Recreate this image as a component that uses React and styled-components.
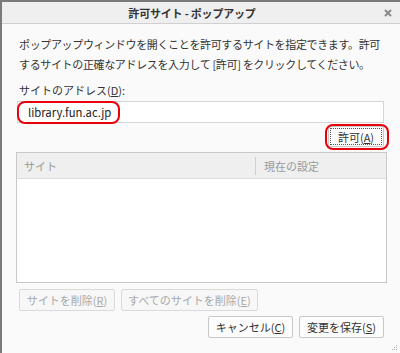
import React from 'react';
import styled, { createGlobalStyle } from 'styled-components';

const GlobalStyle = createGlobalStyle`
  html, body {
    margin: 0;
    padding: 0;
    background: #fafafa;
  }
  body {
    font-family: "Noto Sans CJK JP", "Noto Sans", sans-serif;
    font-size: 11px;
    color: #333;
  }
`;

const Window = styled.div`
  position: relative;
  box-sizing: border-box;
  width: 400px;
  height: 353px;
  display: flex;
  flex-direction: column;
  background: #fafafa;
  border-top: 2px solid #7a7a7a;
  border-left: 2px solid #7a7a7a;
`;

const TitleBar = styled.div`
  position: relative;
  height: 21px;
  padding-right: 18px;
  display: flex;
  align-items: center;
  justify-content: center;
  background: #efefef;
  border-bottom: 1px solid #cfcfcf;
  font-weight: bold;
  font-size: 11px;
  letter-spacing: -0.2px;
  color: #333;
`;

const CloseBtn = styled.span`
  position: absolute;
  right: 8px;
  top: 7px;
  width: 8px;
  height: 8px;
  display: flex;
`;

const Content = styled.div`
  display: flex;
  flex-direction: column;
  padding: 10px 16px 0 15px;
`;

const Description = styled.p`
  margin: 0 0 0 2px;
  line-height: 20px;
  letter-spacing: -0.35px;
  white-space: nowrap;

  span {
    display: block;
  }
`;

const Label = styled.div`
  margin: 6px 0 0 2px;
  line-height: 20px;
`;

const Key = styled.u`
  text-underline-offset: 1px;
`;

const InputWrap = styled.div`
  position: relative;
  margin-top: 1px;
`;

const AddressInput = styled.div`
  box-sizing: border-box;
  height: 22px;
  padding: 0 10px;
  display: flex;
  align-items: center;
  background: #fff;
  border: 1px solid #d4d4d4;
  font-size: 11.3px;
  color: #222;
`;

const Highlight = styled.div`
  position: absolute;
  box-sizing: border-box;
  border: 2px solid #e8000b;
  border-radius: 8px;
  pointer-events: none;
  left: ${({ l }) => l}px;
  top: ${({ t }) => t}px;
  width: ${({ w }) => w}px;
  height: ${({ h }) => h}px;
`;

const Row = styled.div`
  display: flex;
  justify-content: ${({ end }) => (end ? 'flex-end' : 'flex-start')};
  gap: 6px;
  margin-top: ${({ mt }) => mt}px;
  margin-left: ${({ ml }) => ml || 0}px;
`;

const Button = styled.button`
  position: relative;
  box-sizing: border-box;
  height: ${({ h }) => h || 22}px;
  min-width: ${({ mw }) => mw || 0}px;
  padding: 0 6px;
  font-family: inherit;
  font-size: 11px;
  color: ${({ disabled }) => (disabled ? '#a8a8a8' : '#333')};
  background: ${({ disabled }) => (disabled ? '#f7f7f7' : '#fcfcfc')};
  border: 1px solid ${({ disabled }) => (disabled ? '#dadada' : '#c8c8c8')};
  border-radius: 2px;
  display: flex;
  align-items: center;
  justify-content: center;
  outline: ${({ focused }) => (focused ? '1px dotted #555' : 'none')};
  outline-offset: -3px;
`;

const FocusWrap = styled.div`
  position: relative;
`;

const SiteList = styled.div`
  box-sizing: border-box;
  height: 131px;
  margin: 5px -3px 0 -1px;
  background: #fff;
  border: 1px solid #c8c8c8;
  display: flex;
  flex-direction: column;
`;

const ListHeader = styled.div`
  display: flex;
  align-items: center;
  height: 25px;
  background: #efefef;
  border-bottom: 1px solid #dcdcdc;
  color: #9a9a9a;
`;

const HeaderCell = styled.div`
  display: flex;
  align-items: center;
  height: 18px;
  padding-left: ${({ pl }) => pl}px;
  width: ${({ w }) => (w ? `${w}px` : 'auto')};
  flex: ${({ w }) => (w ? 'none' : 1)};
  border-left: ${({ divider }) => (divider ? '1px solid #cfcfcf' : 'none')};
`;

const Grip = styled.svg`
  position: absolute;
  right: 2px;
  bottom: 2px;
`;

const App = () => (
  <>
    <GlobalStyle />
    <Window>
      <TitleBar>
        許可サイト - ポップアップ
        <CloseBtn>
          <svg width="8" height="8" viewBox="0 0 8 8">
            <path d="M1 1 L7 7 M7 1 L1 7" stroke="#8a8a8a" strokeWidth="2" />
          </svg>
        </CloseBtn>
      </TitleBar>
      <Content>
        <Description>
          <span>ポップアップウィンドウを開くことを許可するサイトを指定できます。許可</span>
          <span>するサイトの正確なアドレスを入力して [許可] をクリックしてください。</span>
        </Description>
        <Label>
          サイトのアドレス(<Key>D</Key>):
        </Label>
        <InputWrap>
          <AddressInput>library.fun.ac.jp</AddressInput>
          <Highlight l={0} t={0} w={103} h={23} />
        </InputWrap>
        <Row end mt={3}>
          <FocusWrap>
            <Button focused h={21} mw={56}>
              許可(<Key>A</Key>)
            </Button>
            <Highlight l={-3} t={-2} w={64} h={26} />
          </FocusWrap>
        </Row>
        <SiteList>
          <ListHeader>
            <HeaderCell pl={7} w={231}>サイト</HeaderCell>
            <HeaderCell pl={8} divider>現在の設定</HeaderCell>
          </ListHeader>
        </SiteList>
        <Row mt={6} ml={2}>
          <Button disabled mw={96}>
            サイトを削除(<Key>R</Key>)
          </Button>
          <Button disabled mw={136}>
            すべてのサイトを削除(<Key>E</Key>)
          </Button>
        </Row>
        <Row end mt={5}>
          <Button mw={85}>
            キャンセル(<Key>C</Key>)
          </Button>
          <Button mw={85}>
            変更を保存(<Key>S</Key>)
          </Button>
        </Row>
      </Content>
      <Grip width="6" height="6" viewBox="0 0 6 6">
        <rect x="4" y="0" width="1" height="1" fill="#b0b0b0" />
        <rect x="2" y="2" width="1" height="1" fill="#b0b0b0" />
        <rect x="4" y="2" width="1" height="1" fill="#b0b0b0" />
        <rect x="0" y="4" width="1" height="1" fill="#b0b0b0" />
        <rect x="2" y="4" width="1" height="1" fill="#b0b0b0" />
        <rect x="4" y="4" width="1" height="1" fill="#b0b0b0" />
      </Grip>
    </Window>
  </>
);

export default App;
